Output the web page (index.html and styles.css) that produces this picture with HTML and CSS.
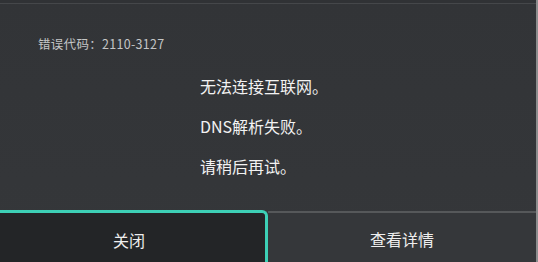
FILE: index.html
```html
<!DOCTYPE html>
<html lang="zh-CN">
<head>
<meta charset="utf-8">
<link rel="stylesheet" href="styles.css">
</head>
<body>
<div class="screen">
  <div class="topline"></div>
  <div class="content">
    <div class="code">错误代码：2110-3127</div>
    <div class="messages">
      <p class="msg">无法连接互联网。</p>
      <p class="msg">DNS解析失败。</p>
      <p class="msg">请稍后再试。</p>
    </div>
  </div>
  <div class="buttons">
    <div class="btn btn-close">关闭</div>
    <div class="btn btn-detail">查看详情</div>
  </div>
</div>
</body>
</html>
```
FILE: styles.css
```css
html, body {
  margin: 0;
  padding: 0;
  width: 538px;
  height: 262px;
  overflow: hidden;
  background: #333538;
}
.screen {
  width: 536px;
  height: 270px;
  display: flex;
  flex-direction: column;
  border-right: 2px solid #8c8d8e;
  font-family: "Noto Sans CJK SC", "Noto Sans", sans-serif;
  background: linear-gradient(180deg, #323437 0%, #35373a 100%);
}
.topline {
  height: 3px;
  border-bottom: 1px solid #45474a;
  background: #303235;
}
.content {
  flex: 1;
  padding-left: 38px;
  padding-top: 32px;
}
.code {
  font-size: 12.5px;
  line-height: 16px;
  letter-spacing: 0.3px;
  color: #c4c5c6;
}
.messages {
  padding-left: 162px;
  padding-top: 14px;
}
.msg {
  margin: 0;
  font-size: 16px;
  line-height: 40px;
  color: #f2f2f2;
}
.buttons {
  height: 60px;
  display: flex;
}
.btn {
  display: flex;
  align-items: center;
  justify-content: center;
  font-size: 16px;
  color: #eeeeee;
  box-sizing: border-box;
}
.btn-close {
  width: 278px;
  margin-left: -10px;
  border: 3px solid #3dd0b6;
  border-bottom: none;
  border-top-right-radius: 6px;
  background: #232527;
  padding-bottom: 4px;
}
.btn-detail {
  flex: 1;
  margin-top: 1px;
  border-top: 2px solid #56585a;
  background: #35373a;
  padding-bottom: 5px;
}
```
